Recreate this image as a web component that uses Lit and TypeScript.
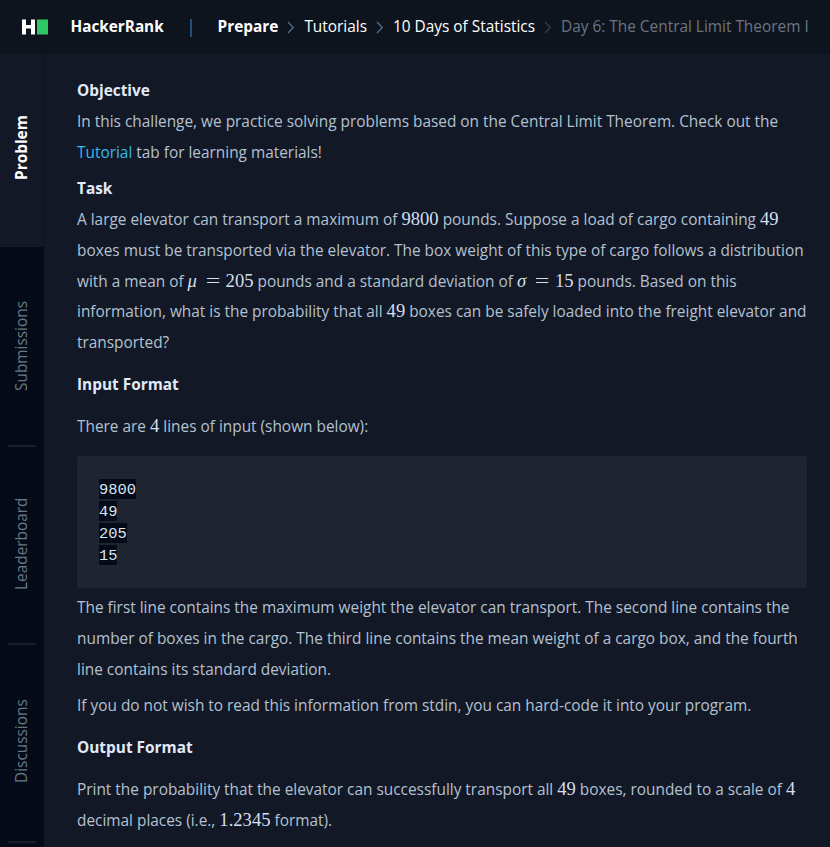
import { LitElement, html, css, svg } from "lit";
import { customElement, property } from "lit/decorators.js";

const chevron = svg`<path d="M1 1 L6.3 6.5 L1 12" fill="none" stroke="currentColor" stroke-width="1.2"/>`;

@customElement("app-header")
class AppHeader extends LitElement {
  static styles = css`
    :host { display: flex; align-items: center; height: 54px; box-sizing: border-box; padding-left: 22px; background: #0e141e; color: #fff; font-size: 15.4px; white-space: nowrap; overflow: hidden; }
    .logo { width: 26px; height: 16px; margin: -1px 22.5px 0 0; flex: none; }
    .brand { font-weight: 700; width: 119.5px; font-size: 15.3px; margin-top: -2px; }
    .rule { width: 2px; height: 18px; background: linear-gradient(90deg, #244f78 50%, #45494f 50%); margin: 2px 25.5px 0 0; flex: none; }
    .crumb { flex: none; margin-top: -2px; }
    .bold { font-weight: 700; }
    .sep { width: 8px; height: 13px; flex: none; color: #59709a; margin: 0 9px 0 9px; }
    .dim { color: #39424e; }
    .last { color: #6b747e; }
  `;
  render() {
    return html`
      <svg class="logo" viewBox="0 0 26 16">
        <path d="M0 .5H4V6H9V.5H13V15.5H9V9.5H4V15.5H0Z" fill="#fff"/>
        <rect x="15" y="0.5" width="11" height="15" fill="#2ec866"/>
      </svg>
      <span class="brand">HackerRank</span>
      <span class="rule"></span>
      <span class="crumb bold">Prepare</span>
      <svg class="sep" viewBox="0 0 8 13">${chevron}</svg>
      <span class="crumb">Tutorials</span>
      <svg class="sep" viewBox="0 0 8 13">${chevron}</svg>
      <span class="crumb">10 Days of Statistics</span>
      <svg class="sep dim" viewBox="0 0 8 13">${chevron}</svg>
      <span class="crumb last">Day 6: The Central Limit Theorem I</span>
    `;
  }
}

@customElement("side-tabs")
class SideTabs extends LitElement {
  @property({ attribute: false }) tabs = ["Problem", "Submissions", "Leaderboard", "Discussions"];
  static styles = css`
    :host { display: flex; flex-direction: column; width: 44px; flex: none; background: #040a18; overflow: hidden; }
    .tab { height: 198px; flex: none; box-sizing: border-box; display: flex; flex-direction: column; align-items: center; padding-right: 1px; color: #647a80; font-size: 15.4px; }
    .tab.active { height: 193px; margin-bottom: 2px; padding: 0 0 5px; background: #121826; color: #fff; font-weight: 700; border-right: 1px solid #0d1320; }
    .label { flex: 1; display: flex; align-items: center; justify-content: center; writing-mode: vertical-rl; transform: rotate(180deg); }
    .tab:not(.active) .label { padding-top: 3px; }
    .line { width: 28px; height: 2px; background: #181e2a; }
  `;
  render() {
    return this.tabs.map((t, i) => html`
      <div class="tab ${i === 0 ? "active" : ""}">
        <span class="label">${t}</span>
        ${i ? html`<span class="line"></span>` : ""}
      </div>`);
  }
}

@customElement("challenge-body")
class ChallengeBody extends LitElement {
  static styles = css`
    :host { display: block; flex: 1; min-width: 0; box-sizing: border-box; padding: 22.3px 23px 0 33px; background: #121826; color: #b4c1d0; font-size: 15.4px; line-height: 30.8px; white-space: nowrap; }
    p { margin: 0 0 5.5px; }
    p.loose { margin-bottom: 11.2px; }
    b { color: #e0eaf8; font-weight: 700; }
    .link { color: #35b8ea; }
    .m { font: 18.6px/1 "Liberation Serif", serif; color: #d3deef; }
    .i { display: inline-block; width: 12px; font-style: italic; line-height: 1; }
    .eq { display: inline-block; width: 26px; text-align: center; line-height: 1; transform: scaleX(1.4); }
    pre { margin: 12.9px 0 5.3px; padding: 23px 22px 21px; height: 88px; background: #1e2531; border-radius: 2px; line-height: 22px; font-family: "Liberation Mono", monospace; font-size: 15.4px; }
    code { font: inherit; background: #040a18; color: #d9e4ef; padding: 2px 0 0; }
  `;
  render() {
    const m = (s: string) => html`<span class="m">${s}</span>`;
    const eq = (s: string, n: string) => html`<span class="m"><span class="i">${s}</span><span class="eq">=</span>${n}</span>`;
    return html`
      <p><b>Objective</b><br>In this challenge, we practice solving problems based on the Central Limit Theorem. Check out the<br><span class="link">Tutorial</span> tab for learning materials!</p>
      <p class="loose"><b>Task</b><br>A large elevator can transport a maximum of ${m("9800")} pounds. Suppose a load of cargo containing ${m("49")}<br>boxes must be transported via the elevator. The box weight of this type of cargo follows a distribution<br>with a mean of ${eq("μ", "205")} pounds and a standard deviation of ${eq("σ", "15")} pounds. Based on this<br>information, what is the probability that all ${m("49")} boxes can be safely loaded into the freight elevator and<br>transported?</p>
      <p class="loose"><b>Input Format</b></p>
      <p class="last">There are ${m("4")} lines of input (shown below):</p>
      <pre>${["9800", "49", "205", "15"].map((v) => html`<code>${v}</code><br>`)}</pre>
      <p>The first line contains the maximum weight the elevator can transport. The second line contains the<br>number of boxes in the cargo. The third line contains the mean weight of a cargo box, and the fourth<br>line contains its standard deviation.</p>
      <p class="loose">If you do not wish to read this information from stdin, you can hard-code it into your program.</p>
      <p class="loose"><b>Output Format</b></p>
      <p>Print the probability that the elevator can successfully transport all ${m("49")} boxes, rounded to a scale of ${m("4")}<br>decimal places (i.e., ${m("1.2345")} format).</p>
    `;
  }
}

@customElement("app-root")
class AppRoot extends LitElement {
  static styles = css`
    :host { display: flex; flex-direction: column; height: 847px; overflow: hidden; background: #121826; font-family: "Open Sans", sans-serif; }
    .main { display: flex; flex: 1; min-height: 0; }
  `;
  render() {
    return html`<app-header></app-header><div class="main"><side-tabs></side-tabs><challenge-body></challenge-body></div>`;
  }
}
